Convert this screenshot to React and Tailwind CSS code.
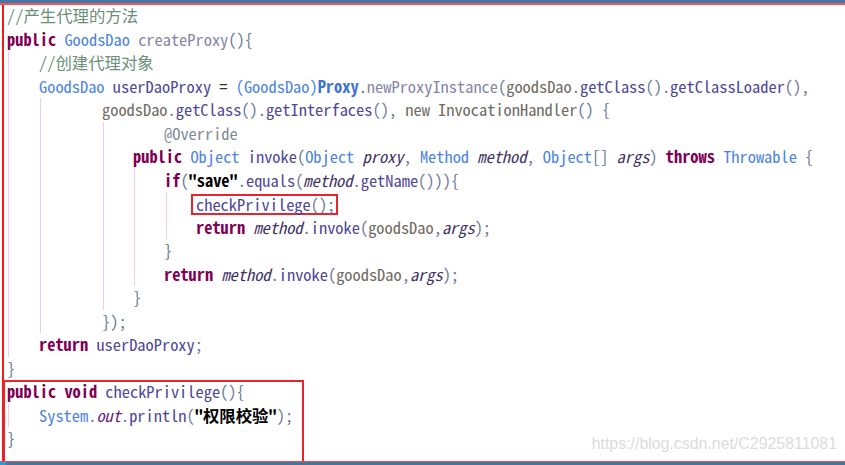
import React from 'react'

// token helpers: every colour written out so Tailwind picks it up
const Kw = ({ children }) => <span className="font-bold text-[#7f0055]">{children}</span>
const Ty = ({ children }) => <span className="text-[#4d84de]">{children}</span>
const Id = ({ children }) => <span className="text-[#4f4898]">{children}</span>
const Lt = ({ children }) => <span className="text-[#8686a6]">{children}</span>
const Vr = ({ children }) => <span className="text-[#6f6b62]">{children}</span>
const It = ({ children }) => <span className="italic text-[#3f3566]">{children}</span>
const P = ({ children }) => <span className="text-[#6d7a98]">{children}</span>
const Cm = ({ children }) => <span className="text-[#6b8f78]">{children}</span>
const Str = ({ children }) => <span className="font-bold text-black">{children}</span>

const Line = ({ indent = 'pl-0', extra = '', children }) => (
  <div className={`h-[23.5px] leading-[23.5px] whitespace-pre ${indent} ${extra}`}>{children}</div>
)

// block with a pink indent guide running down its left side
const Guide = ({ at, children }) => (
  <div className="relative">
    <div className={`absolute top-0 bottom-0 w-px bg-[#f8c6ec] ${at}`} />
    {children}
  </div>
)

export default function App() {
  return (
    <div
      className="w-[845px] h-[465px] flex flex-col bg-white overflow-hidden text-[16.4px] relative"
      style={{ fontFamily: '"Noto Sans Mono CJK SC", "Liberation Mono", "Noto Sans CJK SC", monospace' }}
    >
      <div className="h-[3px] bg-[#3f7ba6]" />
      <div className="h-[2px] bg-[#f2545e]" />

      <div className="flex-1 flex">
        <div className="w-[2px]" />
        <div className="w-[2px] bg-[#f01c1c]" />

        <div className="flex-1 flex flex-col pl-[3px] -mt-px relative">
          <Line>
            <Cm>//产生代理的方法</Cm>
          </Line>
          <Line>
            <Kw>public</Kw> <Ty>GoodsDao</Ty> <Lt>createProxy</Lt>
            <P>(){'{'}</P>
          </Line>

          <Guide at="left-px">
            <Line indent="pl-[32px]">
              <Cm>//创建代理对象</Cm>
            </Line>
            <Line indent="pl-[32px]">
              <Ty>GoodsDao</Ty> <Id>userDaoProxy</Id> <span className="text-[#333]">=</span> <Ty>(GoodsDao)</Ty>
              <span className="font-bold text-[#3f74d4]">Proxy</span>
              <P>.</P>
              <Lt>newProxyInstance</Lt>
              <P>(</P>
              <Vr>goodsDao</Vr>
              <P>.</P>
              <Id>getClass</Id>
              <P>().</P>
              <Id>getClassLoader</Id>
              <P>(),</P>
            </Line>

            <Guide at="left-[33px]">
              <Line indent="pl-[95px]">
                <Vr>goodsDao</Vr>
                <P>.</P>
                <Id>getClass</Id>
                <P>().</P>
                <Id>getInterfaces</Id>
                <P>(), </P>
                <Vr>new InvocationHandler</Vr>
                <P>() {'{'}</P>
              </Line>

              <Guide at="left-[96px]">
                <Line indent="pl-[157px]">
                  <span className="text-[#7f8b98]">@Override</span>
                </Line>
                <Line indent="pl-[126px]">
                  <Kw>public</Kw> <Ty>Object</Ty> <Id>invoke</Id>
                  <P>(</P>
                  <Ty>Object</Ty> <It>proxy</It>
                  <P>, </P>
                  <Ty>Method</Ty> <It>method</It>
                  <P>, </P>
                  <Ty>Object</Ty>
                  <P>[] </P>
                  <It>args</It>
                  <P>) </P>
                  <Kw>throws</Kw> <Ty>Throwable</Ty> <P>{'{'}</P>
                </Line>

                <Guide at="left-[127px]">
                  <Line indent="pl-[157px]">
                    <Kw>if</Kw>
                    <P>(</P>
                    <Str>"save"</Str>
                    <P>.</P>
                    <Id>equals</Id>
                    <P>(</P>
                    <It>method</It>
                    <P>.</P>
                    <Id>getName</Id>
                    <P>())){'{'}</P>
                  </Line>

                  <Guide at="left-[159px]">
                    <Line indent="pl-[184px]" extra="flex items-start">
                      <span className="mt-[2px] h-[21px] leading-[17px] border-2 border-[#e8242c] pl-[3px] pr-px">
                        <Id>checkPrivilege</Id>
                        <P>();</P>
                      </span>
                    </Line>
                    <Line indent="pl-[189px]">
                      <Kw>return</Kw> <It>method</It>
                      <P>.</P>
                      <Id>invoke</Id>
                      <P>(</P>
                      <Vr>goodsDao</Vr>
                      <P>,</P>
                      <It>args</It>
                      <P>);</P>
                    </Line>
                  </Guide>

                  <Line indent="pl-[157px]">
                    <P>{'}'}</P>
                  </Line>
                  <Line indent="pl-[157px]">
                    <Kw>return</Kw> <It>method</It>
                    <P>.</P>
                    <Id>invoke</Id>
                    <P>(</P>
                    <Vr>goodsDao</Vr>
                    <P>,</P>
                    <It>args</It>
                    <P>);</P>
                  </Line>
                </Guide>

                <Line indent="pl-[126px]">
                  <P>{'}'}</P>
                </Line>
              </Guide>

              <Line indent="pl-[95px]">
                <P>{'});'}</P>
              </Line>
            </Guide>

            <Line indent="pl-[32px]">
              <Kw>return</Kw> <Id>userDaoProxy</Id>
              <P>;</P>
            </Line>
          </Guide>

          <Line>
            <P>{'}'}</P>
          </Line>

          <div className="flex-1 -ml-[4px] w-[301px] border-2 border-b-0 border-[#e8242c] pl-[2px]">
            <div className="-mt-[2px]">
              <Line>
                <Kw>public</Kw> <Kw>void</Kw> <Id>checkPrivilege</Id>
                <P>(){'{'}</P>
              </Line>
              <Guide at="left-px">
                <Line indent="pl-[32px]">
                  <Ty>System</Ty>
                  <P>.</P>
                  <span className="italic text-[#6a1f7e]">out</span>
                  <P>.</P>
                  <Id>println</Id>
                  <P>(</P>
                  <Str>"权限校验"</Str>
                  <P>);</P>
                </Line>
              </Guide>
              <Line>
                <P>{'}'}</P>
              </Line>
            </div>
          </div>

          <div
            className="absolute right-[8px] bottom-[5px] text-[15.9px] text-[#dcdcdc]"
            style={{ fontFamily: '"Liberation Sans", Arial, sans-serif' }}
          >
            https://blog.csdn.net/C2925811081
          </div>
        </div>
      </div>

      <div className="h-px bg-[#e8505e]" />
      <div className="h-[3px] flex">
        <div className="w-[6px] bg-[#2f9ad8]" />
        <div className="flex-1 bg-[#4a7396]" />
      </div>
    </div>
  )
}
